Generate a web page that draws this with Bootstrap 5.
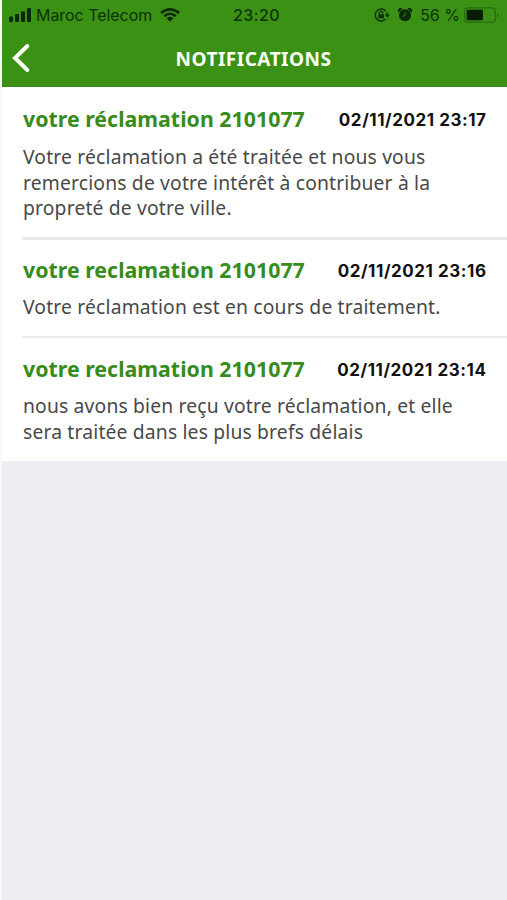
<!DOCTYPE html>
<html lang="fr">
<head>
<meta charset="utf-8">
<meta name="viewport" content="width=device-width, initial-scale=1">
<title>Notifications</title>
<link rel="stylesheet" href="https://cdn.jsdelivr.net/npm/bootstrap@5.3.0/dist/css/bootstrap.min.css">
<style>
body{background:#eeedf3;font-family:"Noto Sans",sans-serif;min-height:900px;border-left:2px solid #f8f8fa;overflow:hidden}
.topbar{background:#3a9114;height:87px;border-bottom:1px solid #388a17}
.status{height:29px;font-family:Inter,"Liberation Sans",sans-serif;color:#0d3207;font-size:16px;line-height:30px;white-space:nowrap;display:grid;grid-template-columns:1fr auto 1fr;padding:0 7px 0 7px}
.status svg{flex:none}
.carrier{letter-spacing:-.05px;margin-left:4px}
.clock{font-weight:500;font-size:16px;letter-spacing:.4px;padding-left:4px}
.titlebar{height:58px;display:grid;grid-template-columns:60px 1fr 62px;align-items:center}
.titlebar h1{font-size:19px;line-height:24px;font-weight:700;letter-spacing:.5px;color:#fbfff5;padding-top:1px}
.notices{padding-top:1px}
.notice{padding:16px 21px 0 0;margin-left:20px;border-bottom:2px solid #e9e9eb}
.notice h2{font-size:21.3px;line-height:30px;font-weight:700;color:#378c1c;white-space:nowrap;letter-spacing:.03px;padding-left:1px}
.notice time{font-family:Inter,sans-serif;font-size:17px;line-height:32px;font-weight:700;color:#111;white-space:nowrap;letter-spacing:.55px;margin-right:-.5px}
.notice p{font-size:19.3px;line-height:25.7px;color:#484848;padding:7px 0 0 1px;white-space:nowrap;letter-spacing:.17px}
.n1{height:152px;border-bottom-width:3px}
.n1 p{padding-top:8px}
.n2{height:98px;padding-top:15px}
.n3{height:123px;border:0}
</style>
<script src="https://cdn.jsdelivr.net/npm/bootstrap@5.3.0/dist/js/bootstrap.bundle.min.js"></script>
</head>
<body>
<header class="topbar">
  <div class="status">
    <div class="d-flex align-items-center">
      <svg width="23" height="14" viewBox="0 0 23 14" fill="#0b2906"><rect x="0" y="8.5" width="4" height="5.5" rx="1"/><rect x="6" y="6" width="4" height="8" rx="1"/><rect x="12" y="3.2" width="4" height="10.8" rx="1"/><rect x="18" y="0" width="4" height="14" rx="1"/></svg>
      <span class="carrier">Maroc Telecom</span>
      <svg class="ms-2" width="20" height="14" viewBox="0 0 20 14" fill="none" stroke="#0b2906" stroke-width="2.5"><path d="M1 5Q10-2.2 19 5M4.2 8.2Q10 3.4 15.8 8.2"/><path d="M6.6 10.2Q10 7.5 13.4 10.2L10 13.8Z" fill="#0b2906" stroke="none"/></svg>
    </div>
    <span class="clock">23:20</span>
    <div class="d-flex align-items-center justify-content-end">
      <svg width="16" height="14" viewBox="0 0 16 14" fill="none" stroke="#0d3207" stroke-width="1.4"><path d="M11.7 3A6 6 0 1 0 11.7 11M12.8 4.4Q13.4 5.5 13.3 7"/><path d="M10.8 6.6H16L13.4 9.7Z" fill="#0d3207" stroke="none"/><rect x="4.3" y="6.3" width="5.6" height="4" fill="#0d3207" stroke="none"/><path d="M5.5 6.5V5a1.6 1.6 0 0 1 3.2 0v1.5" stroke-width="1.1"/></svg>
      <svg class="mx-2" width="14" height="14" viewBox="0 0 14 14"><g fill="#0b2906"><circle cx="7" cy="7.3" r="6"/><path d="M.6 4.5A2.6 2.6 0 0 1 4.5.8ZM13.4 4.5A2.6 2.6 0 0 0 9.5.8Z"/></g><path d="M7 4.2V7.5L4.8 8.3" fill="none" stroke="#3a9114" stroke-width=".9"/></svg>
      <span class="percent">56 %</span>
      <svg class="ms-1" width="36" height="16" viewBox="0 0 36 16"><rect x=".8" y=".8" width="30.4" height="14.4" rx="3" fill="none" stroke="#256e10" stroke-width="1.3"/><rect x="2.7" y="2.8" width="16.2" height="10.4" rx="1" fill="#061c04"/><path d="M33 5.2Q36 8 33 10.8Z" fill="#256e10"/></svg>
    </div>
  </div>
  <div class="titlebar">
    <a href="#" aria-label="Retour" class="d-flex ps-2"><svg width="22" height="30" viewBox="0 0 22 30" fill="none" stroke="#fbfff5" stroke-width="4" stroke-linecap="round" stroke-linejoin="miter"><path d="M17.3 3 5 15 17.3 27"/></svg></a>
    <h1 class="m-0 text-center">NOTIFICATIONS</h1>
  </div>
</header>
<main class="notices bg-white">
  <article class="notice n1">
    <div class="d-flex justify-content-between"><h2 class="m-0">votre réclamation 2101077</h2><time>02/11/2021 23:17</time></div>
    <p class="m-0">Votre réclamation a été traitée et nous vous<br>remercions de votre intérêt à contribuer à la<br>propreté de votre ville.</p>
  </article>
  <article class="notice n2">
    <div class="d-flex justify-content-between"><h2 class="m-0">votre reclamation 2101077</h2><time>02/11/2021 23:16</time></div>
    <p class="m-0">Votre réclamation est en cours de traitement.</p>
  </article>
  <article class="notice n3">
    <div class="d-flex justify-content-between"><h2 class="m-0">votre reclamation 2101077</h2><time>02/11/2021 23:14</time></div>
    <p class="m-0">nous avons bien reçu votre réclamation, et elle<br>sera traitée dans les plus brefs délais</p>
  </article>
</main>
</body>
</html>
